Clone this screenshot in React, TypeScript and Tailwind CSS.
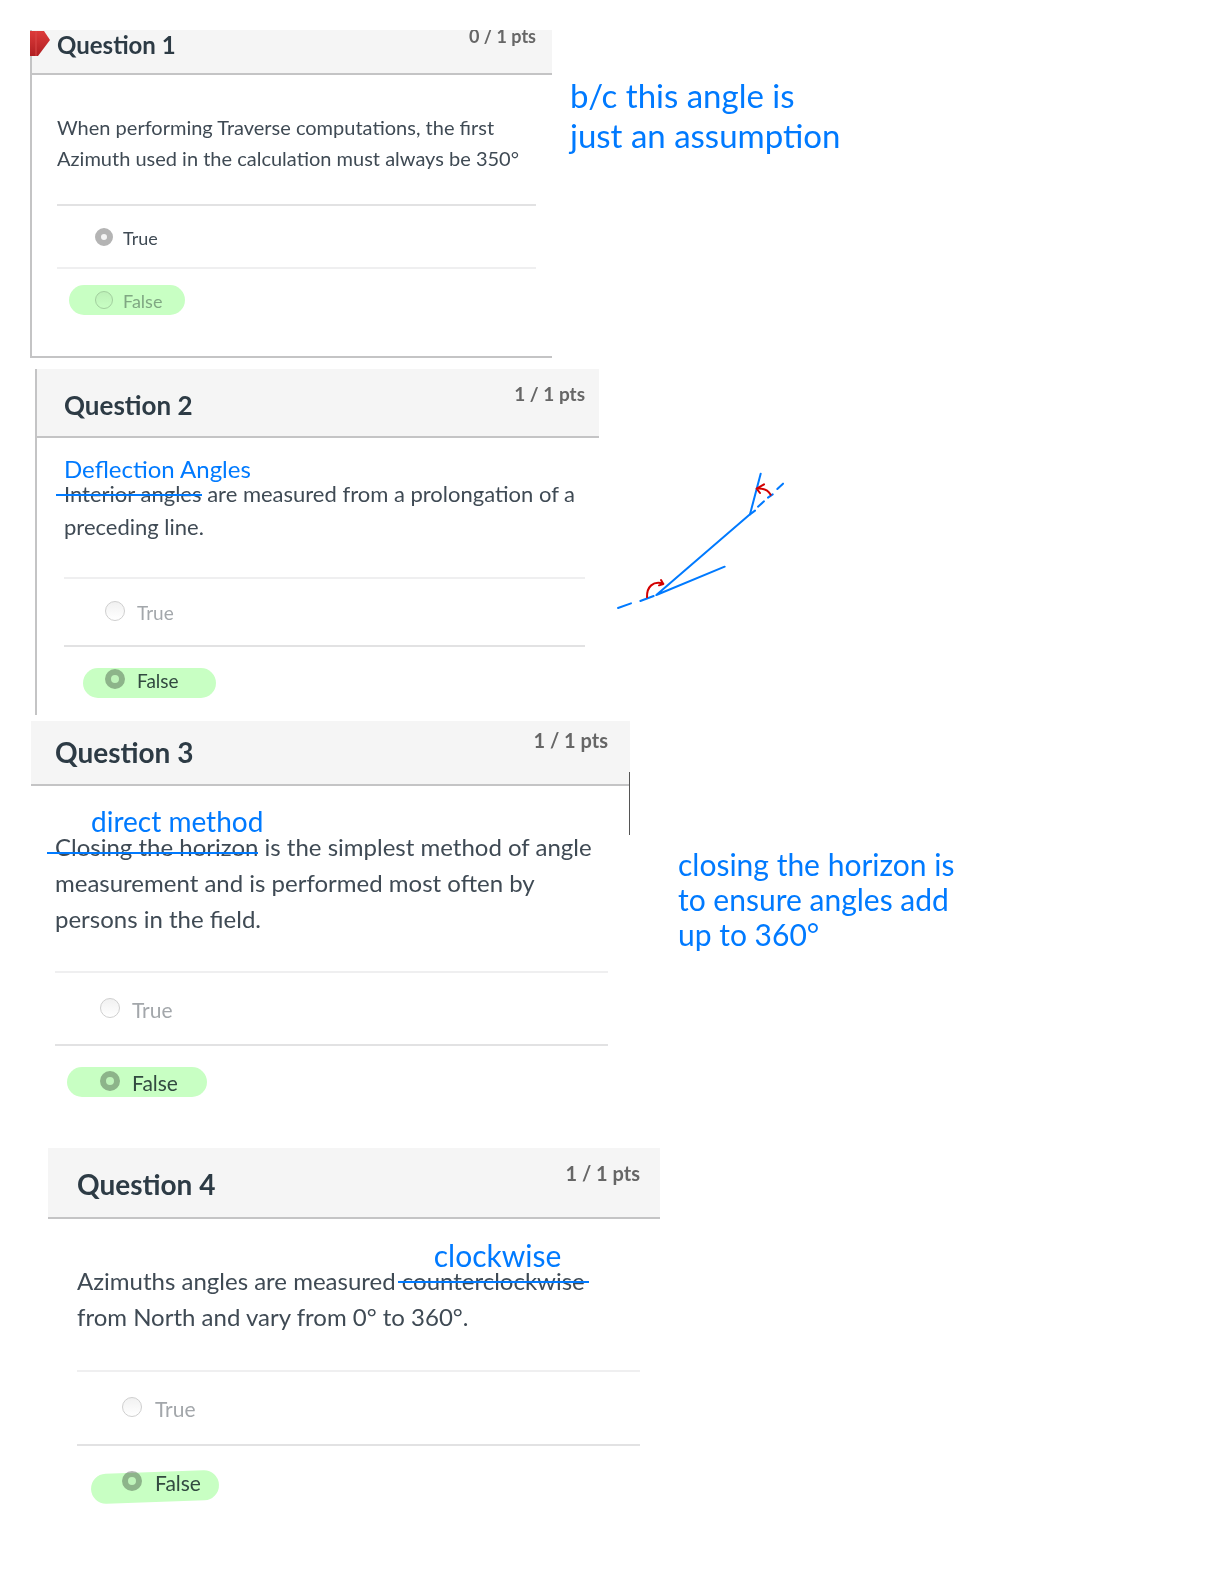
import type { ReactNode } from 'react';
import { clsx } from 'clsx';

interface QuestionCardProps {
  number: number;
  points: string;
  answer: 'True' | 'False';
  cardClass: string;
  headerClass: string;
  titleClass: string;
  pointsClass: string;
  bodyClass: string;
  textClass: string;
  rowClass: string;
  optionClass: string;
  radioClass?: string;
  highlightClass: string;
  flag?: boolean;
  extra?: ReactNode;
  children: ReactNode;
}

function QuestionCard({
  number,
  points,
  answer,
  cardClass,
  headerClass,
  titleClass,
  pointsClass,
  bodyClass,
  textClass,
  rowClass,
  optionClass,
  radioClass = 'mb-1 size-5',
  highlightClass,
  flag,
  extra,
  children,
}: QuestionCardProps) {
  return (
    <section className={clsx('relative w-full', cardClass)}>
      <header className={clsx('flex items-start justify-between overflow-hidden border-b-2 border-[#c4c4c5] bg-[#f5f5f5]', headerClass)}>
        <h2 className={clsx('font-bold text-[#2d3b45]', titleClass)}>Question {number}</h2>
        <span className={clsx('font-bold leading-6 text-[#666666]', pointsClass)}>{points}</span>
      </header>
      {flag && (
        <svg className="absolute -left-0.5 top-0" width="20" height="27" viewBox="0 0 20 27" aria-hidden="true">
          <defs>
            <linearGradient id="flag" x1="0" y1="0" x2="0" y2="1">
              <stop offset="0" stopColor="#dd3a3a" />
              <stop offset="1" stopColor="#b01f22" />
            </linearGradient>
          </defs>
          <path d="M0 1H14L20 10L8 26H0Z" fill="url(#flag)" />
          <path d="M6 1V26" stroke="#d94848" strokeWidth="1" />
        </svg>
      )}
      <div className={bodyClass}>
        <p className={clsx('text-[#3f4a54]', textClass)}>{children}</p>
        {['True', 'False'].map(option => {
          const selected = option === answer;
          return (
            <div key={option} className={clsx('relative flex items-center border-t-2', selected ? 'border-[#e2e2e3]' : 'border-[#efeff0]', rowClass)}>
              <label className={clsx('flex items-center pt-0.5', optionClass, selected ? 'text-[#3f4a54]' : 'text-[#a3a7ab]')}>
                <input
                  type="radio"
                  name={`question-${number}`}
                  defaultChecked={selected}
                  className={clsx(
                    'appearance-none rounded-full border border-[#cfcfcf] bg-linear-to-b from-[#f1f1f1] to-white checked:border-[6px] checked:border-[#b4b4b4] checked:bg-none checked:bg-[#f4f4f4]',
                    radioClass,
                  )}
                />
                {option}
              </label>
              {option === 'False' && <span className={clsx('pointer-events-none absolute h-[30px] rounded-full bg-[#c8ffc3] mix-blend-multiply', highlightClass)} />}
            </div>
          );
        })}
        {extra}
      </div>
    </section>
  );
}

function Correction({ note, noteClass, lineClass, children }: { note: string; noteClass: string; lineClass: string; children: ReactNode }) {
  return (
    <span className="relative inline-block">
      <del className="no-underline">{children}</del>
      <span className={clsx('absolute h-0.5 bg-[#007aff]', lineClass)} />
      <ins className={clsx('absolute whitespace-nowrap leading-6 text-[#007aff] no-underline', noteClass)}>{note}</ins>
    </span>
  );
}

function DeflectionSketch({ className }: { className?: string }) {
  return (
    <svg className={className} width="200" height="160" viewBox="0 0 600 480" fill="none" strokeLinecap="round" strokeLinejoin="round" aria-label="Deflection angle sketch">
      <g stroke="#007aff" strokeWidth="6">
        <path d="M57 444L96 430M124 423L164 408" />
        <path d="M377 320L172 405L453 163L485 41" />
        <path d="M453 163L468 152M477 140L495 124M507 113L521 103M535 87L552 71" />
      </g>
      <g stroke="#d30000" strokeWidth="6">
        <path d="M144 412C143 380 162 362 193 371M186 360L193 372L180 376" />
        <path d="M515 104C507 90 492 84 473 86M495 73L473 86L483 99" />
      </g>
    </svg>
  );
}

export default function App() {
  return (
    <main className="min-h-screen bg-white pt-[30px] pb-12 font-[Lato,sans-serif]">
      <div className="flex items-start pl-[30px]">
        <QuestionCard
          number={1}
          points="0 / 1 pts"
          answer="True"
          cardClass="max-w-[522px] border-b-2 border-l-2 border-[#c4c4c5]"
          headerClass="h-[45px] pl-[25px] pr-4"
          titleClass="text-2xl leading-[30px]"
          pointsClass="-mt-[6px] text-lg"
          bodyClass="pt-[37px] pr-4 pb-[26px] pl-[25px]"
          textClass="mb-[30px] text-xl leading-[31px]"
          rowClass="h-[63px] pl-[38px]"
          optionClass="gap-[10px] text-lg"
          radioClass="mb-0.5 size-[18px]"
          highlightClass="left-3 w-[116px]"
          flag
        >
          When performing Traverse computations, the first Azimuth used in the calculation must always be 350°
        </QuestionCard>
        <p className="mt-[45px] ml-[18px] shrink-0 text-[33px] leading-10 text-[#007aff]">
          b/c this angle is
          <br />
          just an assumption
        </p>
      </div>

      <div className="mt-[11px] flex items-start pl-[35px]">
        <QuestionCard
          number={2}
          points="1 / 1 pts"
          answer="False"
          cardClass="max-w-[564px] border-l-2 border-[#c4c4c5]"
          headerClass="h-[69px] pl-[27px] pr-[14px]"
          titleClass="pt-5 text-[26px] leading-8"
          pointsClass="mt-[13px] text-[19px]"
          bodyClass="pt-[39px] pr-[14px] pb-[2px] pl-[27px]"
          textClass="mb-[34px] text-[22px] leading-[33px]"
          rowClass="h-[68px] pl-[41px]"
          optionClass="gap-3 text-[19px]"
          highlightClass="left-[19px] top-[21px] w-[133px]"
        >
          <Correction note="Deflection Angles" noteClass="-top-5 left-0 text-2xl" lineClass="-left-2 right-0 top-[17px]">
            Interior angles
          </Correction>{' '}
          are measured from a prolongation of a preceding line.
        </QuestionCard>
        <DeflectionSketch className="mt-[91px] shrink-0" />
      </div>

      <div className="mt-[6px] flex items-start pl-[31px]">
        <QuestionCard
          number={3}
          points="1 / 1 pts"
          answer="False"
          cardClass="max-w-[599px]"
          headerClass="h-[65px] pl-6 pr-[22px]"
          titleClass="pt-[15px] text-[28px] leading-8"
          pointsClass="mt-[7px] text-xl"
          bodyClass="pt-[43px] pr-[22px] pl-6"
          textClass="mb-[34px] text-2xl leading-9"
          rowClass="h-[73px] pl-[45px]"
          optionClass="gap-3 text-[21px]"
          highlightClass="left-3 top-[21px] w-[140px]"
          extra={<span className="absolute top-[51px] right-0 h-[63px] w-px bg-[#555555]" />}
        >
          <Correction note="direct method" noteClass="-top-5 left-9 text-[28px]" lineClass="-left-2 right-0 top-[23px]">
            Closing the horizon
          </Correction>{' '}
          is the simplest method of angle measurement and is performed most often by persons in the field.
        </QuestionCard>
        <p className="mt-[126px] ml-12 shrink-0 text-[30px] leading-[35px] text-[#007aff]">
          closing the horizon is
          <br />
          to ensure angles add
          <br />
          up to 360°
        </p>
      </div>

      <div className="mt-[31px] flex items-start pl-12">
        <QuestionCard
          number={4}
          points="1 / 1 pts"
          answer="False"
          cardClass="max-w-[612px]"
          headerClass="h-[71px] pl-[29px] pr-5"
          titleClass="pt-5 text-[28px] leading-8"
          pointsClass="mt-[13px] text-xl"
          bodyClass="pt-[44px] pr-5 pl-[29px]"
          textClass="mb-[35px] text-2xl leading-9"
          rowClass="h-[74px] pl-[45px]"
          optionClass="gap-[13px] text-[21px]"
          highlightClass="left-[14px] top-[26px] w-[128px] -rotate-2"
        >
          Azimuths angles are measured{' '}
          <Correction note="clockwise" noteClass="-top-5 left-8 text-[30px]" lineClass="-left-1 -right-1 top-[18px]">
            counterclockwise
          </Correction>{' '}
          from North and vary from 0° to 360°.
        </QuestionCard>
      </div>
    </main>
  );
}
